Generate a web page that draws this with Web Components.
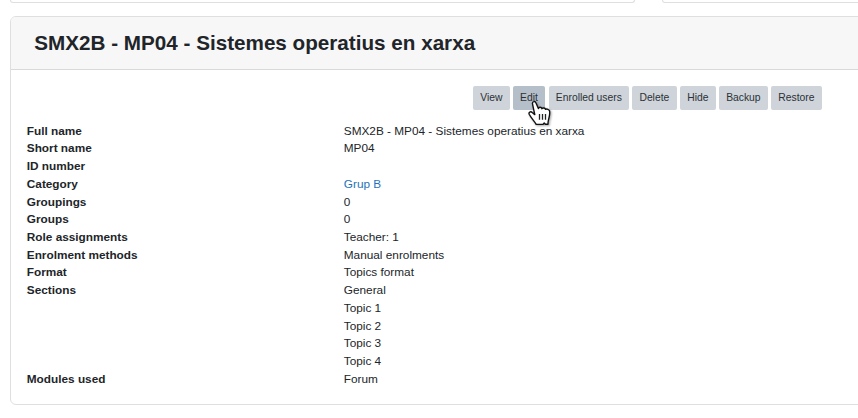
<!DOCTYPE html>
<html lang="en">
<head>
<meta charset="utf-8">
<title>Course management</title>
<style>
html,body{margin:0;height:100%;overflow:hidden;background:#fff}
body{font-family:"Liberation Sans",Arial,sans-serif;font-size:11.8125px;line-height:17.72px;color:#212529}
</style>
</head>
<body>
<course-page></course-page>
<script>
const define = (name, html) => customElements.define(name, class extends HTMLElement {
  constructor() {
    super();
    this.attachShadow({ mode: 'open' }).innerHTML = html;
  }
});

define('panel-edge', `<style>
:host{display:block;box-sizing:border-box;height:3px;border:1px solid #dfdfdf;border-top:0;border-radius:0 0 6px 6px}
</style>`);

define('action-button', `<style>
:host{display:block;box-sizing:border-box;height:24px;width:var(--w);padding-right:.3px;border-radius:2px;background:#ced4da;color:#2c3136;font-size:10.34px;line-height:23px;text-align:center;white-space:nowrap}
:host([active]){background:#b5bfc9;width:32px;margin-right:1px;padding-right:0}
</style><slot></slot>`);

define('detail-row', `<style>
:host{display:grid;grid-template-columns:317px 1fr}
b{font-weight:700;white-space:nowrap}
div{min-height:17.72px}
</style><b><slot name="label"></slot></b><div><slot></slot></div>`);

define('course-card', `<style>
:host{display:block;box-sizing:border-box;width:880px;height:389px;border:1px solid #dfdfdf;border-radius:6px;overflow:hidden;background:#fff}
header{box-sizing:border-box;height:53px;padding:0 23.3px;background:#f7f7f7;border-bottom:1px solid #d9d9d9}
h3{margin:0;font-size:20.67px;line-height:52px;font-weight:700;white-space:nowrap}
nav{display:flex;justify-content:flex-end;gap:3px;padding:16px 67px 0 0}
section{padding:12.74px 16px 0 15.8px}
</style><header><h3><slot name="title"></slot></h3></header><nav><slot name="actions"></slot></nav><section><slot></slot></section>`);

define('hand-pointer', `<style>
:host{position:absolute;left:527px;top:100px;width:26px;height:28px;filter:drop-shadow(1px 1px 1px rgba(0,0,0,.35))}
svg{display:block}
</style><svg width="26" height="28" viewBox="0 0 26 28">
<path d="M5.4 3.4C5.4 1.2 8.3.9 9 3l2.4 5.5c.5-1.8 3-1.7 3.6.2.8-1.2 3-.9 3.5.7 1.3-.8 3.8 0 4.1 1.6.5 3.1-.2 5.5-.8 7.7-.4 1.6-.8 2.5-.8 5.6h-2.6l-1.2-1.3-1.3 1.4H9.2C8 21.8 4 17.9 2.2 14.2c-.8-2 1.5-3.2 3-1.7l2.6 2.1-1-4.4z" fill="#fff" stroke="#111" stroke-width="1.4" stroke-linejoin="round"/>
<path d="M12.5 14v5.8M15.5 14v5.8M18.5 14v5.8" stroke="#222" stroke-width="1.3"/>
</svg>`);

define('course-page', `<style>
:host{display:block;height:418px;overflow:hidden;position:relative}
.above{display:grid;grid-template-columns:625px 625px;gap:27px;padding-left:10px;margin-bottom:13px}
course-card{margin-left:10px}
a{color:#1f73bd;text-decoration:none}
</style>
<div class="above"><panel-edge></panel-edge><panel-edge></panel-edge></div>
<course-card>
<span slot="title">SMX2B - MP04 - Sistemes operatius en xarxa</span>
<action-button slot="actions" style="--w:37px">View</action-button>
<action-button slot="actions" active>Edit</action-button>
<action-button slot="actions" style="--w:80px">Enrolled users</action-button>
<action-button slot="actions" style="--w:45px">Delete</action-button>
<action-button slot="actions" style="--w:36px">Hide</action-button>
<action-button slot="actions" style="--w:49px">Backup</action-button>
<action-button slot="actions" style="--w:51px">Restore</action-button>
<detail-row><span slot="label">Full name</span>SMX2B - MP04 - Sistemes operatius en xarxa</detail-row>
<detail-row><span slot="label">Short name</span>MP04</detail-row>
<detail-row><span slot="label">ID number</span></detail-row>
<detail-row><span slot="label">Category</span><a>Grup B</a></detail-row>
<detail-row><span slot="label">Groupings</span>0</detail-row>
<detail-row><span slot="label">Groups</span>0</detail-row>
<detail-row><span slot="label">Role assignments</span>Teacher: 1</detail-row>
<detail-row><span slot="label">Enrolment methods</span>Manual enrolments</detail-row>
<detail-row><span slot="label">Format</span>Topics format</detail-row>
<detail-row><span slot="label">Sections</span><div>General</div><div>Topic 1</div><div>Topic 2</div><div>Topic 3</div><div>Topic 4</div></detail-row>
<detail-row><span slot="label">Modules used</span>Forum</detail-row>
</course-card>
<hand-pointer></hand-pointer>`);
</script>
</body>
</html>
